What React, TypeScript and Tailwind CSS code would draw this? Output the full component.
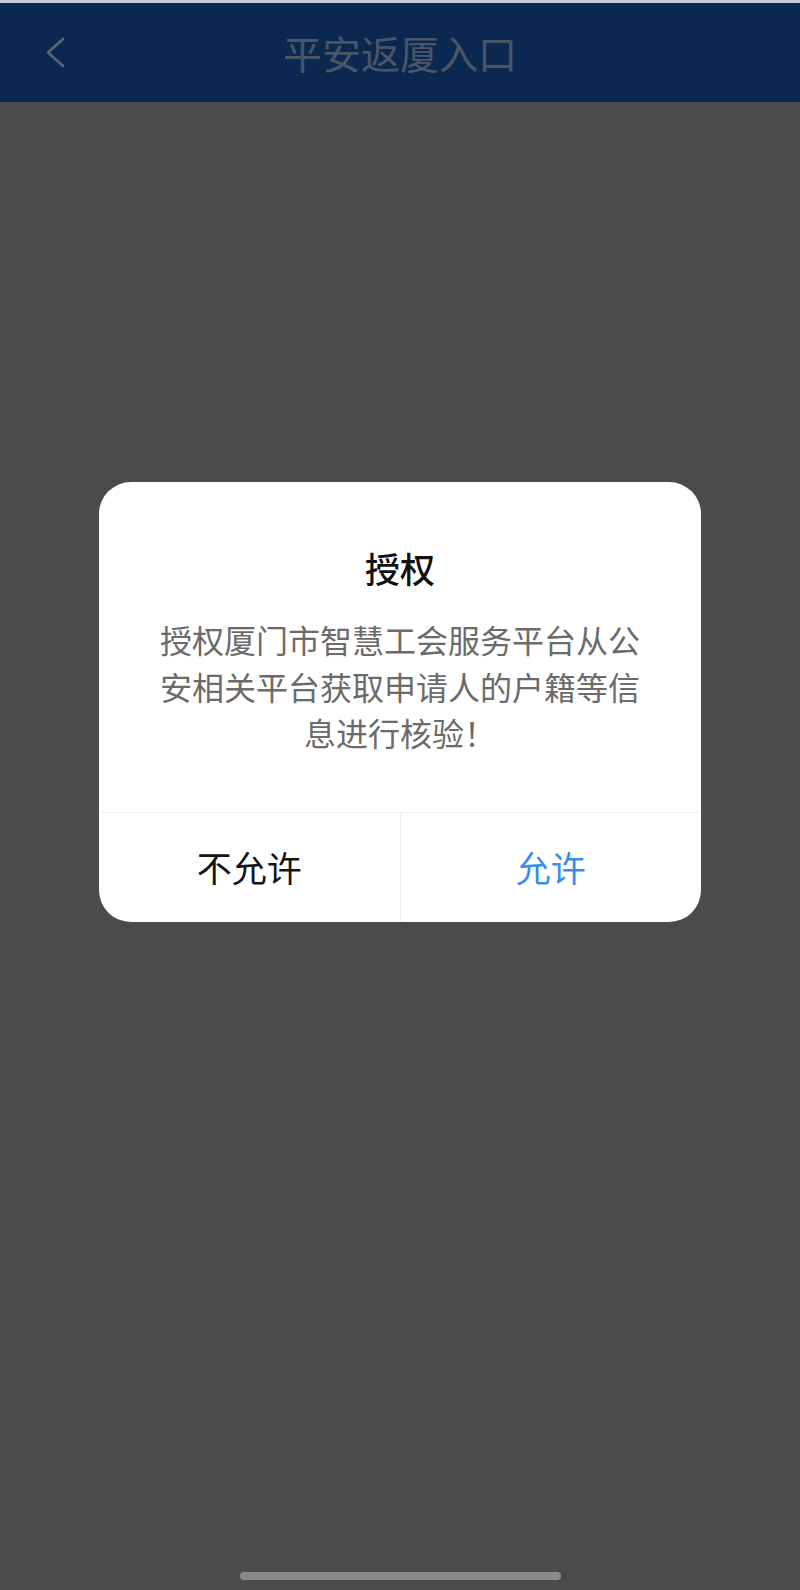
import React from "react";

export default function App() {
  const font = { fontFamily: '"Noto Sans CJK SC", "Noto Sans", sans-serif' };
  return (
    <div
      className="w-[800px] h-[1590px] bg-[#4b4b4b] flex flex-col overflow-hidden"
      style={font}
    >
      <div className="h-[3px] bg-[#c8cdd5]" />
      <div className="h-[99px] bg-[#0b2950] relative flex items-center justify-center">
        <svg
          className="absolute left-[44px] top-[34px]"
          width="24"
          height="32"
          viewBox="0 0 24 32"
          fill="none"
        >
          <path
            d="M19 2 L4 15.5 L19 29"
            stroke="#5b6678"
            strokeWidth="2.6"
            strokeLinecap="round"
            strokeLinejoin="round"
          />
        </svg>
        <span className="text-[39px] leading-none text-[#4a5568] tracking-[0px]">
          平安返厦入口
        </span>
      </div>

      <div className="flex-1 flex flex-col items-center">
        <div className="mt-[380px] w-[602px] h-[440px] bg-white rounded-[32px] flex flex-col overflow-hidden">
          <div className="h-[330px] flex flex-col items-center pt-[62px] px-[60px]">
            <div className="text-[35px] leading-[48px] font-medium text-[#111111]">
              授权
            </div>
            <div className="mt-[24px] text-[32px] leading-[46.5px] text-[#6b6b6b] text-center w-[482px]">
              授权厦门市智慧工会服务平台从公安相关平台获取申请人的户籍等信息进行核验！
            </div>
          </div>
          <div className="flex-1 flex border-t border-[#efefef]">
            <div className="flex-1 flex items-center justify-center border-r border-[#efefef] text-[35px] text-[#141414]">
              不允许
            </div>
            <div className="flex-1 flex items-center justify-center text-[35px] text-[#3a8ee8]">
              允许
            </div>
          </div>
        </div>
        <div className="mt-auto mb-[10px] w-[321px] h-[8px] rounded-full bg-[#8a8a8a]" />
      </div>
    </div>
  );
}
